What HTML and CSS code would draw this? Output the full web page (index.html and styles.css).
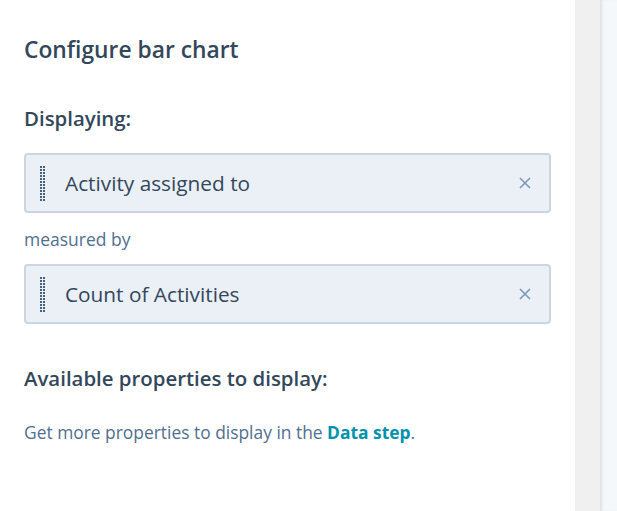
FILE: index.html
```html
<!DOCTYPE html>
<html lang="en">
<head>
	<meta charset="UTF-8">
	<title>Configure bar chart</title>
	<link rel="stylesheet" href="styles.css">
</head>
<body>
	<div class="layout">
		<div class="panel">
			<h2 class="title">Configure bar chart</h2>

			<h3 class="label">Displaying:</h3>
			<div class="chip">
				<svg class="grip" width="6" height="35" viewBox="0 0 6 35"><rect width="6" height="35" fill="url(#dots)"/></svg>
				<span class="chip-text">Activity assigned to</span>
				<svg class="close" width="12" height="12" viewBox="0 0 12 12"><path d="M1 1L11 11M11 1L1 11"/></svg>
			</div>

			<p class="sub">measured by</p>
			<div class="chip">
				<svg class="grip" width="6" height="35" viewBox="0 0 6 35"><rect width="6" height="35" fill="url(#dots)"/></svg>
				<span class="chip-text">Count of Activities</span>
				<svg class="close" width="12" height="12" viewBox="0 0 12 12"><path d="M1 1L11 11M11 1L1 11"/></svg>
			</div>

			<h3 class="label label-avail">Available properties to display:</h3>
			<p class="hint">Get more properties to display in the <a href="#">Data step</a>.</p>
		</div>
		<div class="gutter"></div>
		<div class="side"></div>
	</div>

	<svg width="0" height="0" class="defs">
		<defs>
			<pattern id="dots" width="3" height="3" patternUnits="userSpaceOnUse">
				<rect width="2" height="2" fill="#46607d"/>
			</pattern>
		</defs>
	</svg>
</body>
</html>
```

FILE: styles.css
```css
html,body{margin:0;padding:0;height:100%;}
body{font-family:"Open Sans",Lato,sans-serif;color:#33475b;background:#fff;}
.defs{position:absolute;}
.layout{display:flex;height:511px;}
.panel{width:575px;box-sizing:border-box;padding:35px 24px 0 24px;}
.gutter{width:25px;background:#f0f0f0;}
.side{flex:1;background:#f5f8fa;box-shadow:inset 3px 0 3px -1px rgba(45,62,80,.12);}

.title{margin:0;font-size:22.8px;line-height:30px;font-weight:600;}
.label{margin:40px 0 0;font-size:20.4px;line-height:26px;font-weight:600;}
.label-avail{margin-top:41px;}

.chip{display:flex;align-items:center;box-sizing:border-box;width:527px;height:60px;margin-top:22px;padding:0 18px 0 14px;background:#eaf0f6;border:2px solid #cbd6e2;border-radius:4px;}
.grip{flex:none;margin-right:19px;}
.chip-text{flex:1;font-size:20.8px;color:#33475b;}
.close{stroke:#7c98b6;stroke-width:1.6;fill:none;}

.sub{margin:15px 0 0;font-size:17.5px;line-height:22px;color:#516f90;}
.sub + .chip{margin-top:14px;}

.hint{margin:30px 0 0;font-size:17.4px;line-height:22px;color:#516f90;}
.hint a{color:#0091ae;font-weight:700;text-decoration:none;}
```
